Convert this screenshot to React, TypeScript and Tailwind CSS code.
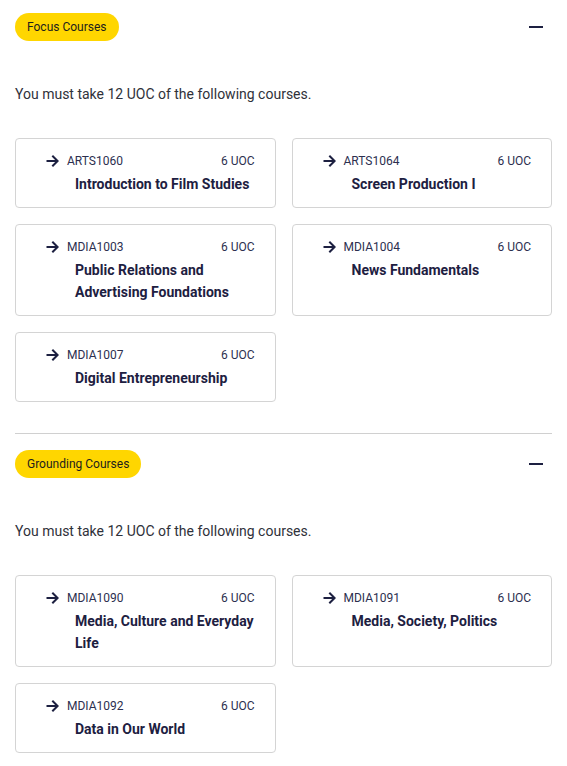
const focus = [
  { code: "ARTS1060", title: "Introduction to Film Studies" },
  { code: "ARTS1064", title: "Screen Production I" },
  { code: "MDIA1003", title: "Public Relations and Advertising Foundations" },
  { code: "MDIA1004", title: "News Fundamentals" },
  { code: "MDIA1007", title: "Digital Entrepreneurship" },
];

const grounding = [
  { code: "MDIA1090", title: "Media, Culture and Everyday Life" },
  { code: "MDIA1091", title: "Media, Society, Politics" },
  { code: "MDIA1092", title: "Data in Our World" },
];

function Arrow() {
  return (
    <svg width="13" height="12" viewBox="0 0 13 12" fill="none" className="shrink-0">
      <path d="M0.5 6H11.5" stroke="#1d2041" strokeWidth="2" />
      <path d="M6.3 0.7L11.6 6L6.3 11.3" stroke="#1d2041" strokeWidth="2" />
    </svg>
  );
}

function CourseCard({ code, title }: { code: string; title: string }) {
  return (
    <div className="border border-[#d4d4d4] rounded-[4px] bg-white pl-[30px] pr-[10px] pt-[14px] pb-[12px]">
      <div className="flex items-center mr-[10px] h-4">
        <Arrow />
        <span className="ml-2 text-xs leading-4 text-[#2c2f4f]">{code}</span>
        <span className="ml-auto text-xs leading-4 text-[#2c2f4f]">6 UOC</span>
      </div>
      <div className="mt-1 ml-[29px] text-sm leading-[22px] font-bold text-[#1d2041]">{title}</div>
    </div>
  );
}

function Section({ label, courses }: { label: string; courses: { code: string; title: string }[] }) {
  return (
    <section>
      <div className="flex items-center justify-between">
        <span className="inline-block rounded-full bg-[#ffd600] px-3 py-[6px] text-xs leading-4 text-[#1d1d1d]">
          {label}
        </span>
        <button aria-label="Collapse" className="mr-[9px] flex items-center">
          <span className="block w-[14px] h-[2px] bg-[#1d2041]" />
        </button>
      </div>
      <p className="mt-[43px] text-sm leading-5 text-[#2f313a]">
        You must take 12 UOC of the following courses.
      </p>
      <div className="mt-[34px] grid grid-cols-2 gap-4">
        {courses.map((c) => (
          <CourseCard key={c.code} {...c} />
        ))}
      </div>
    </section>
  );
}

export default function App() {
  return (
    <div className="min-h-screen bg-white px-[15px] pt-[13px] pb-4 font-['Roboto',sans-serif]">
      <Section label="Focus Courses" courses={focus} />
      <hr className="mt-[31px] mb-4 border-0 border-t border-[#d0d0d0]" />
      <Section label="Grounding Courses" courses={grounding} />
    </div>
  );
}
